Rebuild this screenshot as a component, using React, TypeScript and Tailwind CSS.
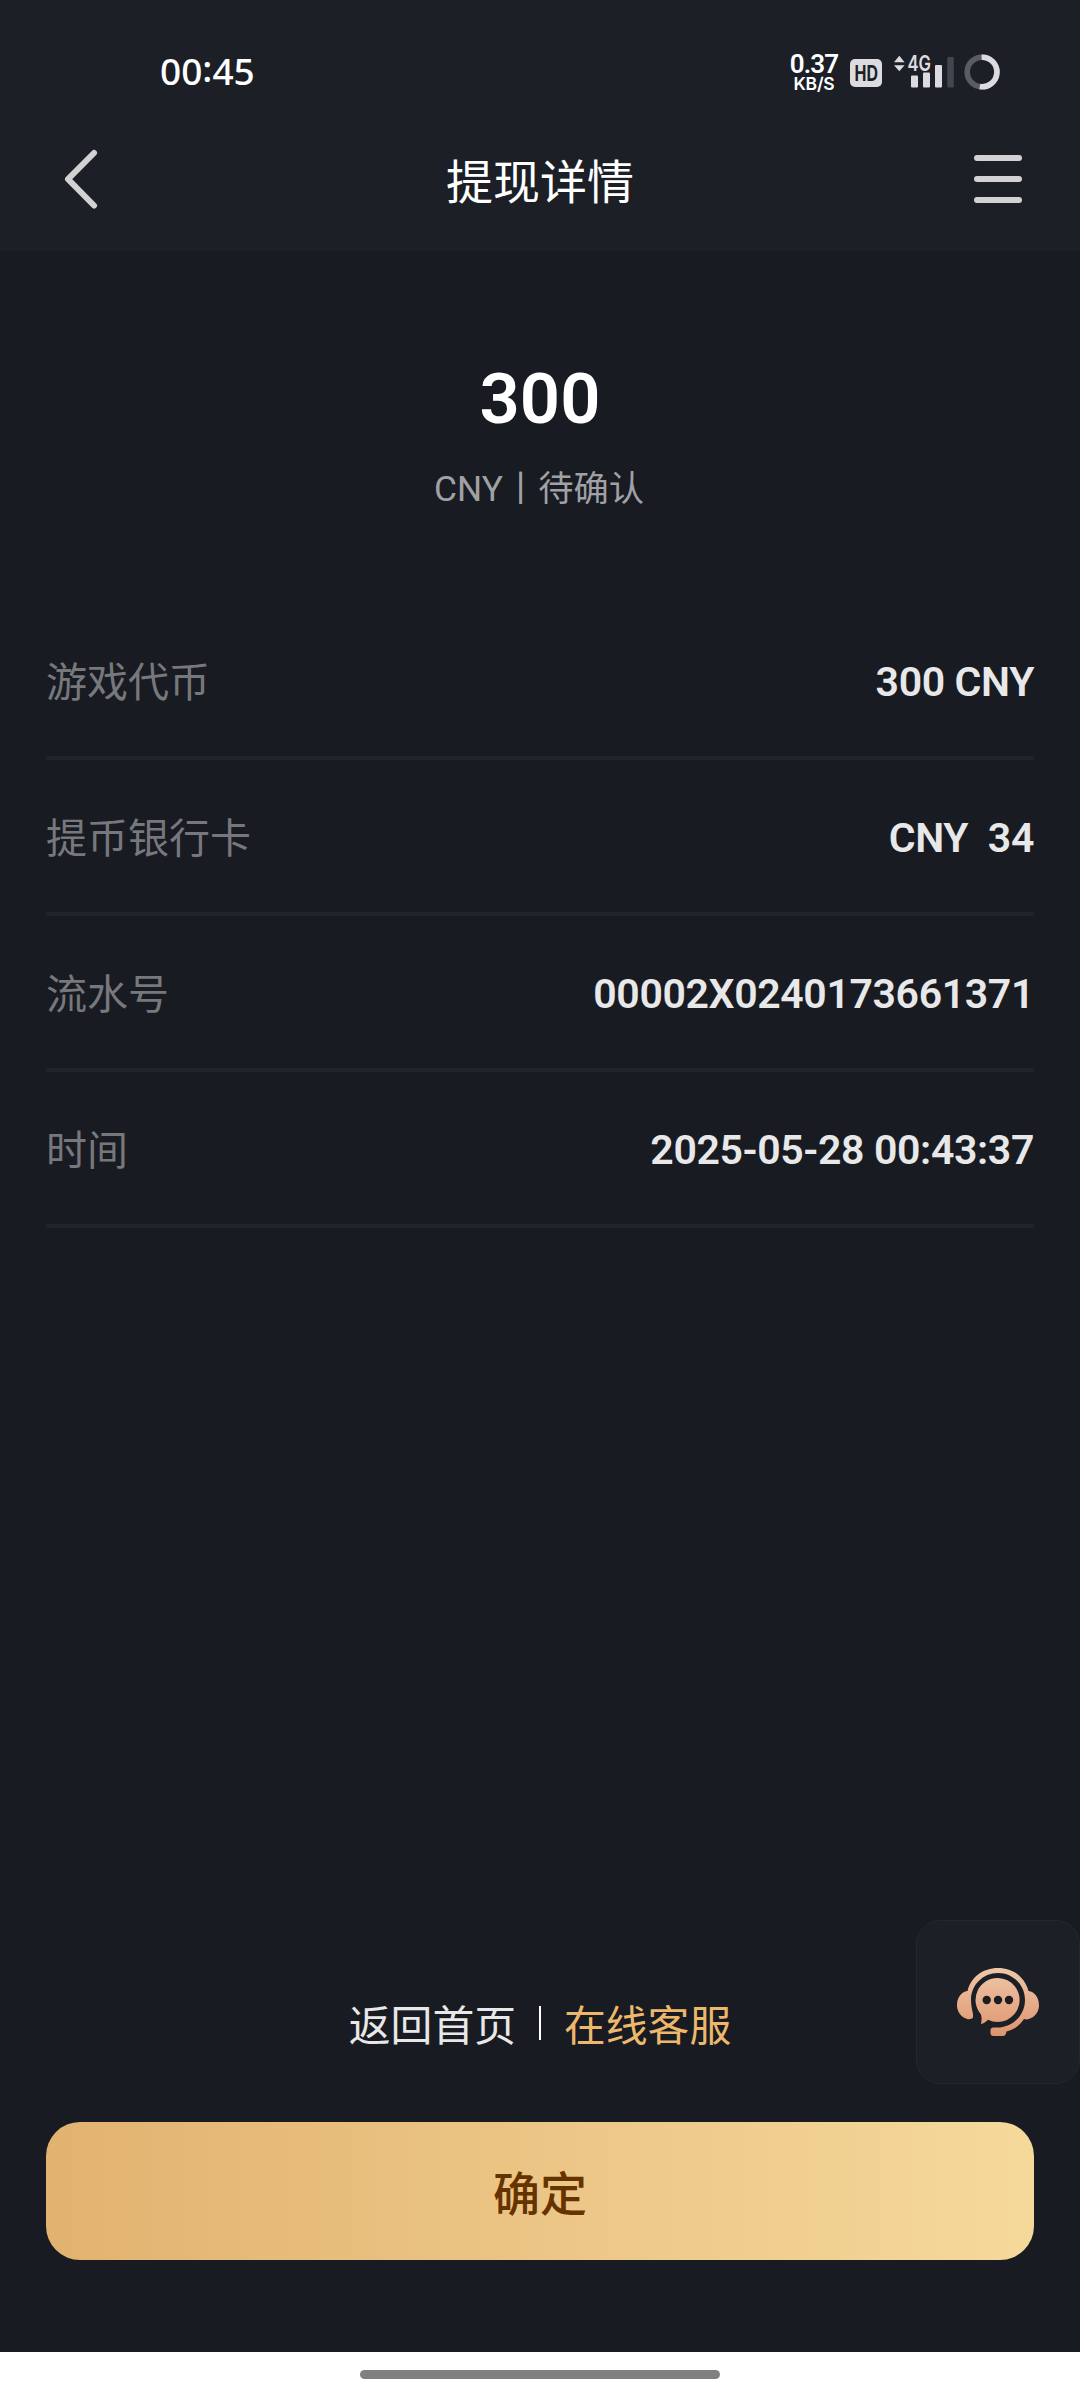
type DetailRow = {
    label: string;
    value: string;
};

const rows: DetailRow[] = [
    { label: '游戏代币', value: '300 CNY' },
    { label: '提币银行卡', value: 'CNY  34' },
    { label: '流水号', value: '00002X0240173661371' },
    { label: '时间', value: '2025-05-28 00:43:37' },
];

const SignalIcon = () => (
    <svg width="62" height="36" viewBox="0 0 62 36" className="ml-3 overflow-visible">
        <path d="M0 8.2 5.3 1.8 10.6 8.2Z M0 11.2H10.6L5.3 17.2Z" fill="#dcdce0" />
        <text x="13.5" y="17.3" fontSize="22" fontWeight="600" textLength="23.5" lengthAdjust="spacingAndGlyphs" fill="#dcdce0" fontFamily="Inter, sans-serif">
            4G
        </text>
        <rect x="17" y="21.5" width="7" height="12" rx="1" fill="#dcdce0" />
        <rect x="29" y="18.5" width="7" height="15" rx="1" fill="#dcdce0" />
        <rect x="41" y="11" width="7" height="22.5" rx="1" fill="#dcdce0" />
        <rect x="53.3" y="3" width="6.5" height="30.5" rx="1" fill="#43464e" />
    </svg>
);

const BatteryRing = () => (
    <svg width="36" height="36" viewBox="0 0 36 36" fill="none" strokeWidth="5.6" className="ml-2">
        <circle cx="18" cy="18" r="14.8" stroke="#5a5c63" />
        <path d="M17.6 3.2a14.8 14.8 0 1 1-1.8 29.4" stroke="#dcdce0" />
    </svg>
);

const StatusBar = () => (
    <div className="h-[110px] pt-[34px] pl-[160px] pr-20 flex items-center justify-between">
        <div className="pb-1 text-white text-[37px] font-medium leading-none font-['Noto_Sans',sans-serif] flex items-center">
            <span>00</span>
            <span className="pb-1.5">:</span>
            <span>45</span>
        </div>
        <div className="flex items-center">
            <div className="w-[52px] pr-1 flex flex-col items-center text-white">
                <span className="text-[26px] leading-[22px] font-semibold tracking-[-0.8px]">0.37</span>
                <span className="text-[17.5px] leading-[17px] font-['Inter',sans-serif] font-semibold tracking-[-0.2px]">KB/S</span>
            </div>
            <svg width="32" height="28" viewBox="0 0 32 28" className="ml-2 mt-0.5 overflow-visible">
                <rect width="32" height="28" rx="5" fill="#dcdce0" />
                <text x="4.5" y="22" fontSize="22" fontWeight="700" textLength="23.5" lengthAdjust="spacingAndGlyphs" fill="#1c1f26" fontFamily="Inter, sans-serif">
                    HD
                </text>
            </svg>
            <SignalIcon />
            <BatteryRing />
        </div>
    </div>
);

const NavBar = () => (
    <div className="h-[141px] px-[58px] pb-[3px] flex items-center justify-between">
        <svg width="48" height="64" viewBox="0 0 48 64" fill="none" stroke="#d2d2d5" strokeWidth="6" strokeLinecap="round" strokeLinejoin="round">
            <path d="M36 6 10 32.2 36 58.5" />
        </svg>
        <h1 className="pt-1.5 text-white text-[47px] leading-none">提现详情</h1>
        <div className="w-12 flex flex-col gap-[15px]">
            <span className="h-1.5 rounded-[3px] bg-[#d2d2d5]" />
            <span className="h-1.5 rounded-[3px] bg-[#d2d2d5]" />
            <span className="h-1.5 rounded-[3px] bg-[#d2d2d5]" />
        </div>
    </div>
);

const ServiceIcon = () => (
    <svg width="82" height="68" viewBox="0 0 82 68">
        <defs>
            <linearGradient id="peach" x1="0" y1="0" x2="0" y2="68" gradientUnits="userSpaceOnUse">
                <stop offset="0" stopColor="#efc7a9" />
                <stop offset="1" stopColor="#de946d" />
            </linearGradient>
        </defs>
        {/* headband, ear cups, mic arm */}
        <path
            fill="url(#peach)"
            d="M16 49.5C15 51 12.500 51.500 10 51C4 49 0 43.500 0 37.500C0 29.500 4 24 10.500 23C14 9 26 0 41 0C56 0 68 9 71.500 23C78 24 82 29.500 82 37.500C82 43.500 78 49 72 51C70 51.500 68.500 51.500 67 51C63 57 57 61.500 49.500 63.500C49 66.500 48 68 46 68H36.500C34.500 68 33.500 67 33.500 65V62.500C33.500 60.500 34.500 59.500 36.500 59.500H43C57 58 68 46.500 68 32C68 17 56 5 41 5C26 5 14 17 14 32C14 38 15.500 43 16 46Z"
        />
        {/* speech bubble */}
        <path fill="url(#peach)" d="M41 10A22 22 0 1 1 31 51.800C29 54 26.500 55.500 24 56C24.500 53 25 50 24 46.500A22 22 0 0 1 41 10Z" />
        <g fill="#1d1d22">
            <circle cx="29.700" cy="32" r="4.200" />
            <circle cx="41" cy="32" r="4.200" />
            <circle cx="52" cy="32" r="4.200" />
        </g>
    </svg>
);

export default function App() {
    return (
        <div className="relative w-[1080px] h-[2400px] flex flex-col overflow-hidden bg-[#181b22] font-['Roboto','Noto_Sans_CJK_SC',sans-serif]">
            <header className="h-[251px] shrink-0 bg-[#1c1f26]">
                <StatusBar />
                <NavBar />
            </header>

            <main className="flex-1 px-[46px] flex flex-col">
                <section className="h-[353px] pt-[107px] flex flex-col items-center">
                    <div className="text-white text-[70.5px] leading-[82px] font-semibold">300</div>
                    <div className="mt-6 pr-0.5 text-[35.25px] leading-[50px] text-[#a0a1a5]">CNY丨待确认</div>
                </section>

                <ul>
                    {rows.map((row) => (
                        <li key={row.label} className="h-[156px] flex items-center justify-between border-b-4 border-[#21242c] text-[41px]">
                            <span className="pt-2 text-[#77787c]">{row.label}</span>
                            <span className="pt-1.5 whitespace-pre font-semibold tracking-[-0.36px] text-[#e8e8e9]">{row.value}</span>
                        </li>
                    ))}
                </ul>

                <div className="mt-auto mb-[92px]">
                    <div className="h-[60px] mb-[66px] flex items-center justify-center text-[41.8px] leading-none">
                        <a className="pt-0.5 text-[#e8e8e9]">返回首页</a>
                        <span className="w-0.5 h-[34px] mx-[23px] mb-1.5 bg-white" />
                        <a className="pt-0.5 text-[#edb86c]">在线客服</a>
                    </div>
                    <button className="w-full h-[138px] pt-2 rounded-[34px] bg-linear-to-r from-[#e2b270] to-[#f5d99b] text-[47px] font-medium text-[#663300]">
                        确定
                    </button>
                </div>
            </main>

            {/* Floating customer service entry */}
            <div className="absolute left-[916px] top-[1920px] w-[164px] h-[164px] rounded-3xl border border-[#24272f] bg-[#1c1f26] flex items-center justify-center">
                <ServiceIcon />
            </div>

            {/* System gesture bar */}
            <footer className="h-12 pb-[3px] shrink-0 bg-white flex items-center justify-center">
                <div className="w-[360px] h-[9px] rounded-full bg-[#808080]" />
            </footer>
        </div>
    );
}
